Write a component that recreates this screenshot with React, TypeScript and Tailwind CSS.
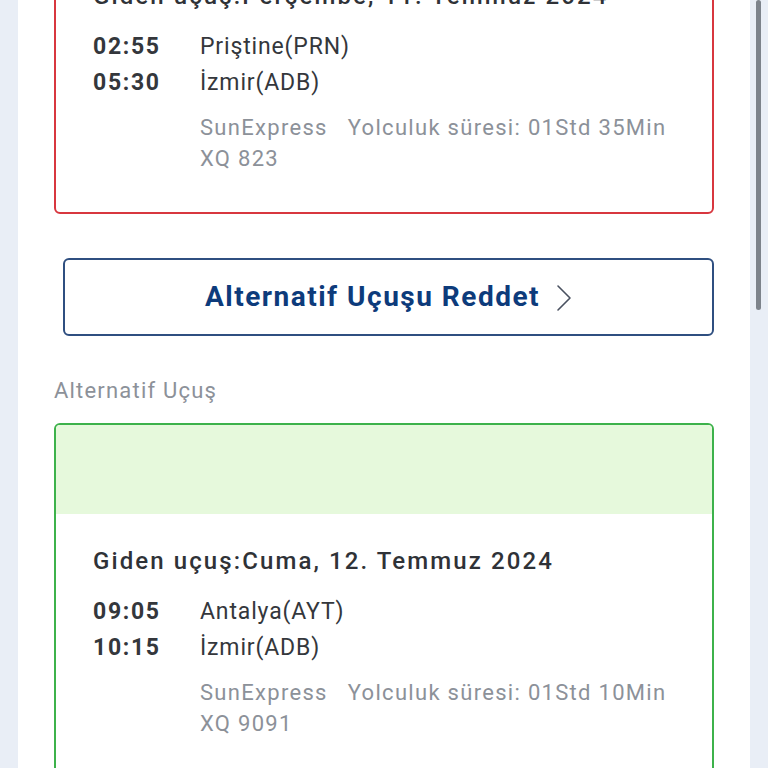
type Flight = {
  title: string;
  dep: string;
  depCity: string;
  arr: string;
  arrCity: string;
  airline: string;
  duration: string;
  code: string;
};

const first: Flight = {
  title: 'Giden uçuş:Perşembe, 11. Temmuz 2024',
  dep: '02:55',
  depCity: 'Priştine(PRN)',
  arr: '05:30',
  arrCity: 'İzmir(ADB)',
  airline: 'SunExpress',
  duration: 'Yolculuk süresi: 01Std 35Min',
  code: 'XQ 823',
};

const alt: Flight = {
  title: 'Giden uçuş:Cuma, 12. Temmuz 2024',
  dep: '09:05',
  depCity: 'Antalya(AYT)',
  arr: '10:15',
  arrCity: 'İzmir(ADB)',
  airline: 'SunExpress',
  duration: 'Yolculuk süresi: 01Std 10Min',
  code: 'XQ 9091',
};

function FlightInfo({ f }: { f: Flight }) {
  return (
    <div className="pl-[37px] pr-2">
      <div className="whitespace-nowrap text-[24px] leading-[30px] font-medium tracking-[2.1px] text-[#2f3237]">{f.title}</div>
      <div className="mt-[18px] grid grid-cols-[107px_1fr] text-[23px] leading-[36px] text-[#34373c]">
        <div className="font-bold tracking-[1.7px]">{f.dep}</div>
        <div className="tracking-[0.85px]">{f.depCity}</div>
        <div className="font-bold tracking-[1.7px]">{f.arr}</div>
        <div className="tracking-[0.85px]">{f.arrCity}</div>
      </div>
      <div className="mt-[11px] pl-[107px] text-[22px] leading-[31px] tracking-[1.3px] text-[#8c9199]">
        <div className="flex gap-[20px] whitespace-nowrap">
          <span>{f.airline}</span>
          <span>{f.duration}</span>
        </div>
        <div>{f.code}</div>
      </div>
    </div>
  );
}

export default function App() {
  return (
    <div className="h-[768px] w-[768px] overflow-hidden bg-[#e9eef6] font-['Roboto',sans-serif]">
      <div className="flex h-full">
        <div className="w-[18px] shrink-0" />
        <div className="w-[732px] shrink-0 bg-white">
          <div className="mx-[36px] -mt-[57px] rounded-[6px] border-2 border-[#d8373f] pt-[36px] pb-[38px]">
            <FlightInfo f={first} />
          </div>

          <div className="ml-[45px] mr-[36px] mt-[44px] flex h-[78px] items-center justify-center gap-[16px] rounded-[6px] border-2 border-[#2f4f80] text-[#0d3b7b]">
            <span className="text-[28px] font-bold tracking-[1.5px]">Alternatif Uçuşu Reddet</span>
            <svg width="16" height="28" viewBox="0 0 16 28" fill="none" className="mt-[2px]">
              <polyline points="2,2 14,14 2,26" stroke="#4a5160" strokeWidth="1.6" strokeLinecap="round" strokeLinejoin="round" />
            </svg>
          </div>

          <div className="ml-[36px] mt-[40px] text-[22px] leading-[30px] tracking-[1.2px] text-[#8c9199]">Alternatif Uçuş</div>

          <div className="mx-[36px] mt-[17px] overflow-hidden rounded-[6px] border-2 border-[#3db24b]">
            <div className="h-[89px] bg-[#e6f9dc]" />
            <div className="pt-[32px] pb-[40px]">
              <FlightInfo f={alt} />
            </div>
          </div>
        </div>
        <div className="relative flex-1">
          <div className="absolute left-[6px] top-0 h-[310px] w-[5px] rounded-full bg-[#7d838b]" />
        </div>
      </div>
    </div>
  );
}
